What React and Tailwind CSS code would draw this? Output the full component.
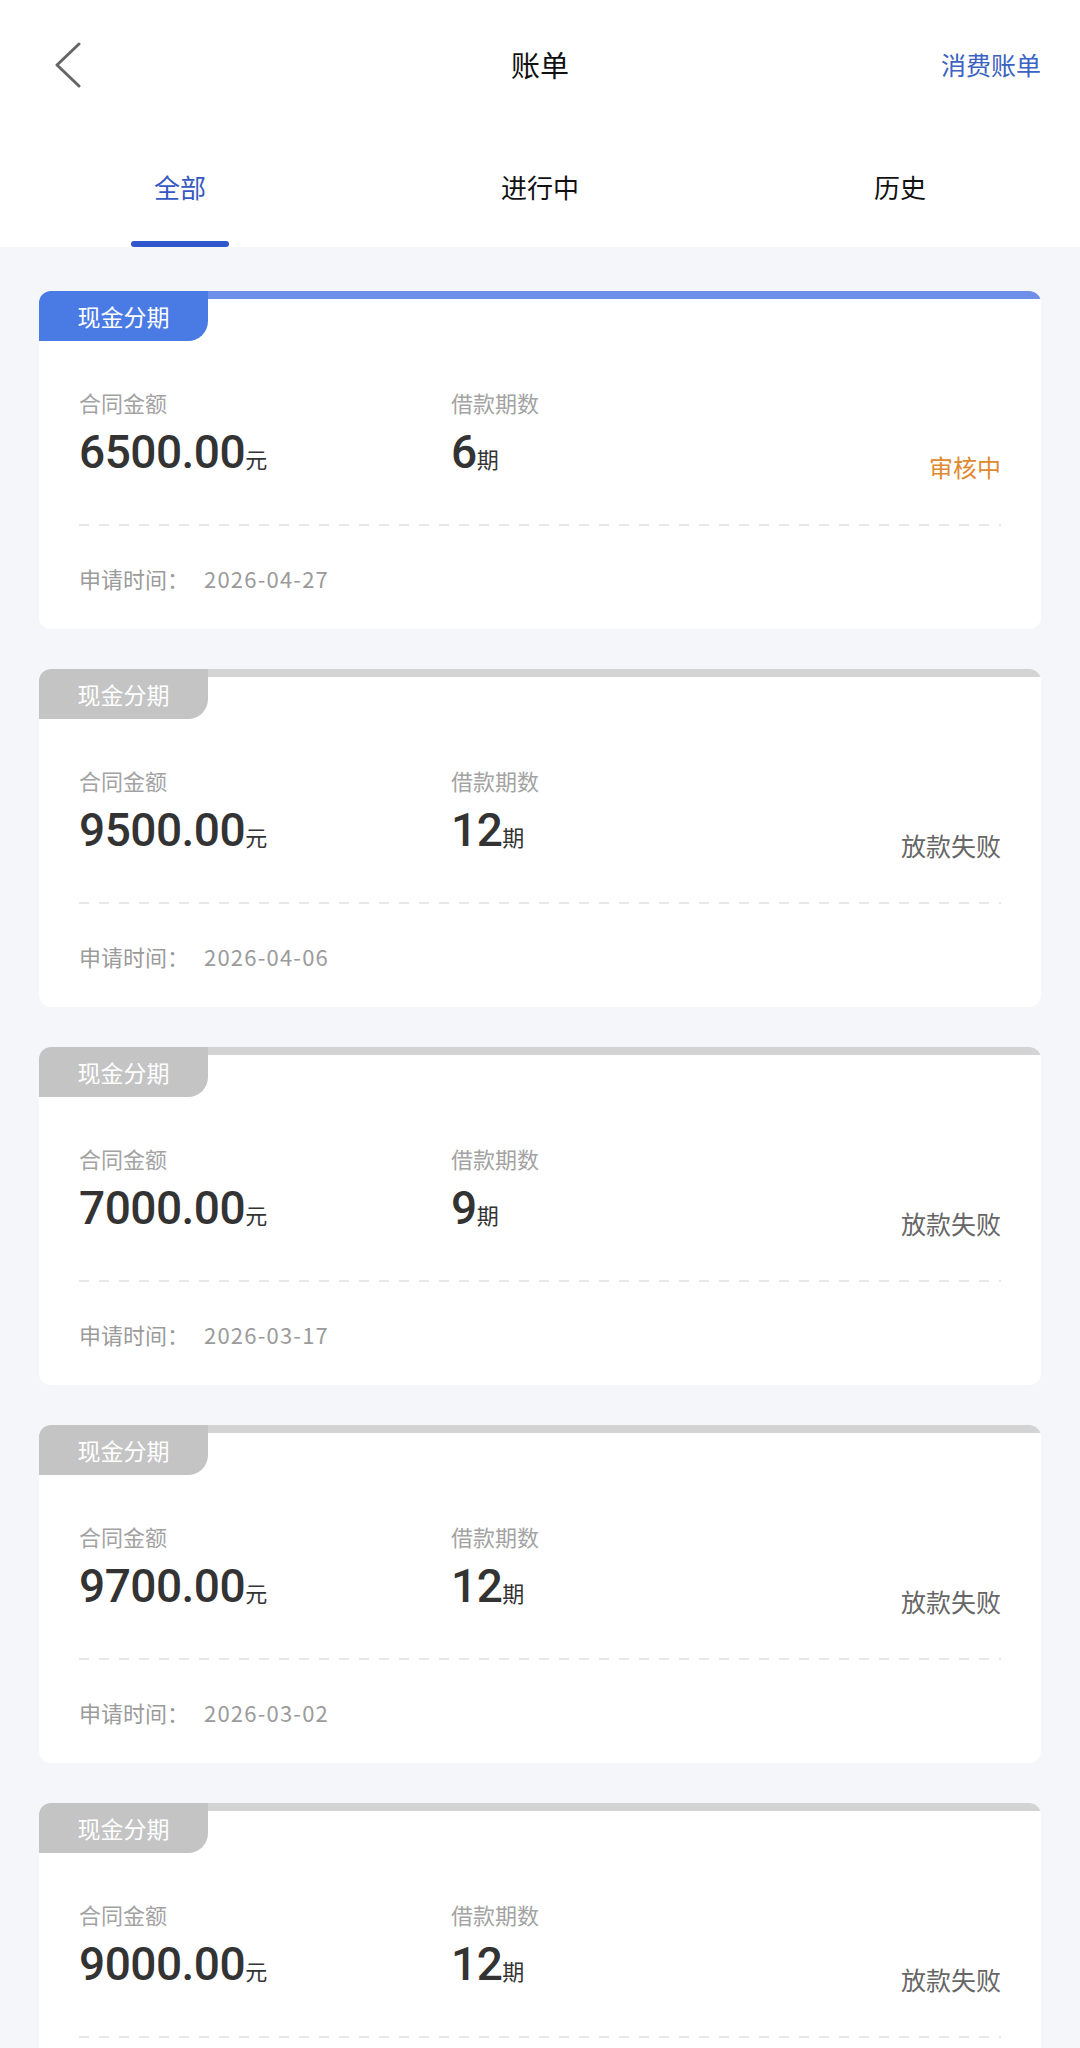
import React, { useState } from 'react';

const bills = [
  { amount: '6500.00', periods: '6', status: 'pending', date: '2026-04-27' },
  { amount: '9500.00', periods: '12', status: 'failed', date: '2026-04-06' },
  { amount: '7000.00', periods: '9', status: 'failed', date: '2026-03-17' },
  { amount: '9700.00', periods: '12', status: 'failed', date: '2026-03-02' },
  { amount: '9000.00', periods: '12', status: 'failed', date: '2026-02-11' },
];

const tabs = ['全部', '进行中', '历史'];

function BillCard({ bill }) {
  const active = bill.status === 'pending';
  return (
    <div className="h-[338px] bg-white rounded-[12px] overflow-hidden">
      <div className="flex items-start">
        <div
          className={
            active
              ? 'w-[169px] h-[50px] bg-[#4a7be5] rounded-br-[20px] flex items-center justify-center text-white text-[23px]'
              : 'w-[169px] h-[50px] bg-[#c4c4c4] rounded-br-[20px] flex items-center justify-center text-white text-[23px]'
          }
        >
          现金分期
        </div>
        <div className={active ? 'flex-1 h-[8px] bg-[#6e8fe9] rounded-tr-[10px]' : 'flex-1 h-[8px] bg-[#d3d3d3] rounded-tr-[10px]'} />
      </div>
      <div className="px-[40px] pt-[46px]">
        <div className="flex items-start">
          <div className="w-[372px]">
            <div className="text-[22px] leading-[30px] text-[#a3a3a3]">合同金额</div>
            <div className="mt-[9px] leading-[52px] text-[#333333]">
              <span className="font-['Roboto'] font-medium text-[46px] tracking-[-0.5px]">{bill.amount}</span>
              <span className="text-[22px]">元</span>
            </div>
          </div>
          <div className="flex-1">
            <div className="text-[22px] leading-[30px] text-[#a3a3a3]">借款期数</div>
            <div className="mt-[9px] leading-[52px] text-[#333333]">
              <span className="font-['Roboto'] font-medium text-[46px] tracking-[-0.5px]">{bill.periods}</span>
              <span className="text-[22px]">期</span>
            </div>
          </div>
          <div
            className={
              active
                ? 'mt-[65px] text-[24px] leading-[30px] text-[#e0892f]'
                : 'mt-[65px] text-[25px] leading-[30px] text-[#666666]'
            }
          >
            {active ? '审核中' : '放款失败'}
          </div>
        </div>
        <div className="mt-[37px] h-[2px] bg-[repeating-linear-gradient(90deg,#e8e8e8_0_10px,transparent_10px_20px)]" />
        <div className="mt-[37px] text-[22px] leading-[30px] text-[#9b9b9b]">
          申请时间：<span className="ml-[15px] tracking-[1.2px]">{bill.date}</span>
        </div>
      </div>
    </div>
  );
}

export default function App() {
  const [tab, setTab] = useState(0);
  return (
    <div className="min-h-screen bg-[#f5f6fa] font-['Noto_Sans_CJK_SC',sans-serif]">
      <div className="bg-white">
        <div className="h-[130px] flex items-center justify-between px-[55px] relative">
          <svg width="28" height="46" viewBox="0 0 28 46" className="-ml-[1px]">
            <path d="M25 2 L3 23 L25 44" fill="none" stroke="#666666" strokeWidth="3" strokeLinecap="round" strokeLinejoin="round" />
          </svg>
          <div className="absolute left-1/2 -translate-x-1/2 text-[29px] text-[#111111]">账单</div>
          <div className="-mr-[16px] text-[25px] text-[#3a62c2]">消费账单</div>
        </div>
        <div className="h-[117px] grid grid-cols-3">
          {tabs.map((t, i) => (
            <button
              key={t}
              onClick={() => setTab(i)}
              className={i === tab ? 'relative flex items-center justify-center pb-[5px] text-[26px] text-[#3558c2]' : 'relative flex items-center justify-center pb-[5px] text-[26px] text-[#111111]'}
            >
              {t}
              {i === tab && <span className="absolute bottom-0 left-1/2 -translate-x-1/2 w-[98px] h-[6px] rounded-full bg-[#2f56cc]" />}
            </button>
          ))}
        </div>
      </div>
      <div className="px-[39px] pt-[44px] pb-[40px] flex flex-col gap-[40px]">
        {bills.map((b, i) => (
          <BillCard key={i} bill={b} />
        ))}
      </div>
    </div>
  );
}
